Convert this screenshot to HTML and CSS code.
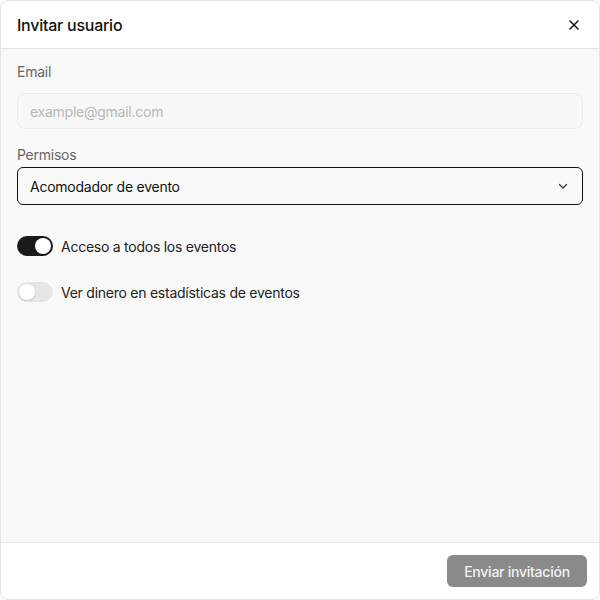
FILE: index.html
```html
<!DOCTYPE html>
<html lang="es">
  <head>
    <meta charset="UTF-8" />
    <meta name="viewport" content="width=device-width, initial-scale=1.0" />
    <title>Invitar usuario</title>
    <link rel="stylesheet" href="styles.css">
  </head>
  <body>
    <div class="dialog">
      <div class="dialog-header">
        <h2 class="dialog-title">Invitar usuario</h2>
        <button class="close-btn" aria-label="Cerrar">
          <svg width="14" height="14" viewBox="0 0 14 14" fill="none" stroke="#111" stroke-width="1.5" stroke-linecap="round">
            <path d="M3 3l8 8M11 3l-8 8" />
          </svg>
        </button>
      </div>

      <div class="dialog-body">
        <label class="field-label label-email">Email</label>
        <input class="text-input" type="email" placeholder="example@gmail.com" />

        <label class="field-label label-perms">Permisos</label>
        <div class="select">
          <span>Acomodador de evento</span>
          <svg width="12" height="12" viewBox="0 0 12 12" fill="none" stroke="#333" stroke-width="1.2" stroke-linecap="round" stroke-linejoin="round">
            <path d="M2.5 4.5L6 8l3.5-3.5" />
          </svg>
        </div>

        <div class="switches">
          <div class="switch-row">
            <span class="switch on"><span class="knob"></span></span>
            <span>Acceso a todos los eventos</span>
          </div>
          <div class="switch-row">
            <span class="switch"><span class="knob"></span></span>
            <span>Ver dinero en estadísticas de eventos</span>
          </div>
        </div>
      </div>

      <div class="dialog-footer">
        <button class="primary-btn">Enviar invitación</button>
      </div>
    </div>
  </body>
</html>
```

FILE: styles.css
```css
* {
  box-sizing: border-box;
}
body {
  margin: 0;
  font-family: Inter, "Noto Sans", sans-serif;
  letter-spacing: -0.25px;
  background: #fff;
  color: #111;
}
.dialog {
  width: 600px;
  height: 600px;
  display: flex;
  flex-direction: column;
  border: 1px solid #e4e4e4;
  border-radius: 8px;
  overflow: hidden;
  background: #f9f9f9;
}
.dialog-header {
  height: 48px;
  flex-shrink: 0;
  display: flex;
  align-items: center;
  justify-content: space-between;
  padding: 0 16px;
  background: #fff;
  border-bottom: 1px solid #e4e4e4;
}
.dialog-title {
  margin: 0;
  font-size: 16px;
  font-weight: 500;
  color: #111;
}
.close-btn {
  border: none;
  background: none;
  padding: 0;
  width: 16px;
  height: 16px;
  display: flex;
  align-items: center;
  justify-content: center;
  margin-right: 1px;
}
.dialog-body {
  flex: 1;
  padding: 13px 16px 16px;
  display: flex;
  flex-direction: column;
}
.field-label {
  font-size: 14px;
  line-height: 20px;
  color: #666;
}
.label-email {
  margin-bottom: 11px;
}
.label-perms {
  margin-top: 16px;
  margin-bottom: 2px;
}
.text-input {
  height: 36px;
  width: 100%;
  padding: 0 12px;
  border: 1px solid #ebebeb;
  border-radius: 8px;
  background: #f7f7f7;
  font-family: inherit;
  font-size: 14px;
  letter-spacing: inherit;
  color: #111;
  outline: none;
}
.text-input::placeholder {
  color: #b8b8b8;
}
.select {
  height: 38px;
  display: flex;
  align-items: center;
  justify-content: space-between;
  padding: 0 13px 0 12px;
  border: 1px solid #111;
  border-radius: 6px;
  background: #f9f9f9;
  font-size: 14px;
  color: #111;
}
.switches {
  margin-top: 31px;
  display: flex;
  flex-direction: column;
  gap: 26px;
}
.switch-row {
  display: flex;
  align-items: center;
  gap: 8px;
  font-size: 14px;
  color: #222;
}
.switch {
  width: 36px;
  height: 20px;
  border-radius: 10px;
  background: #e6e6e6;
  padding: 2px;
  display: flex;
}
.switch.on {
  background: #1a1a1a;
  justify-content: flex-end;
}
.knob {
  width: 16px;
  height: 16px;
  border-radius: 50%;
  background: #fff;
  box-shadow: 0 1px 2px rgba(0, 0, 0, 0.15);
}
.dialog-footer {
  flex-shrink: 0;
  height: 57px;
  display: flex;
  align-items: center;
  justify-content: flex-end;
  padding: 0 12px;
  background: #fff;
  border-top: 1px solid #e4e4e4;
}
.primary-btn {
  height: 32px;
  width: 140px;
  border: none;
  border-radius: 6px;
  background: #8a8a8a;
  color: #f2f2f2;
  font-family: inherit;
  font-size: 14px;
  font-weight: 500;
  letter-spacing: inherit;
}
```
